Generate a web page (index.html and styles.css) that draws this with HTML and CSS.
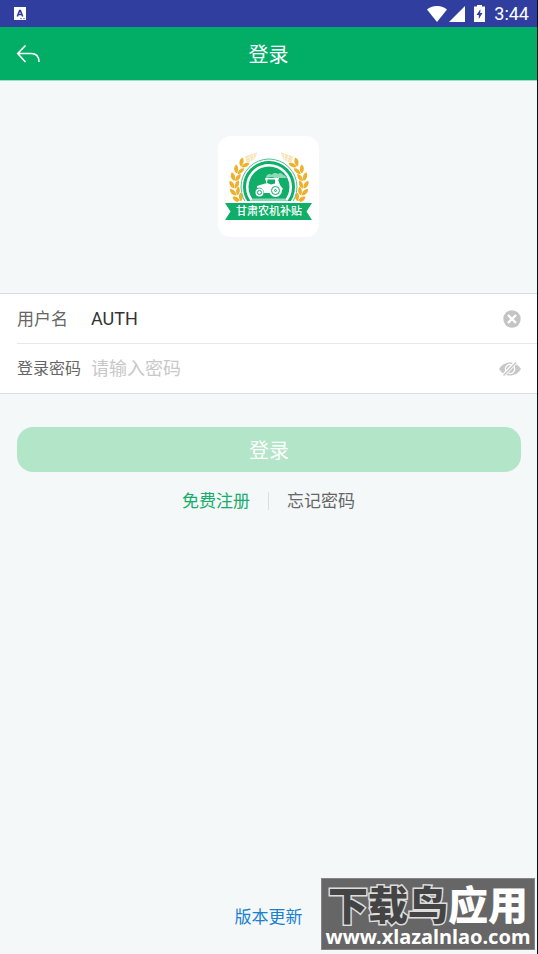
FILE: index.html
```html
<!DOCTYPE html>
<html lang="zh-CN">
  <head>
    <meta charset="utf-8">
    <title>登录</title>
    <meta content="width=device-width,initial-scale=1.0" name="viewport">
    <link rel="stylesheet" href="styles.css">
  </head>
<body>
  <div class="status-bar">
    <svg class="status-app" width="12" height="13" viewBox="0 0 12 13">
      <path fill="#fff" d="M0 0h12v13H0z"/>
      <path fill="none" stroke="#303f9f" stroke-width="1.6" d="M3.300 9.500 5.600 3.500h.8L8.700 9.500M4.300 7.500h3.400"/>
      <path stroke="#303f9f" stroke-width=".6" stroke-dasharray="2 1" d="M6 11.700h5"/>
    </svg>
    <div class="status-icons">
      <svg width="20" height="16" viewBox="0 0 20 16">
        <path fill="#fff" d="M0 3.500C6-1.200 14-1.200 20 3.500L10 16z"/>
      </svg>
      <svg width="16" height="16" viewBox="0 0 16 16">
        <path fill="#fff" d="M16 0v16H0z"/>
      </svg>
      <svg class="status-battery" width="11" height="17" viewBox="0 0 11 17">
        <path fill="#fff" d="M3 0h5v1.500h3V17H0V1.500h3z"/>
        <path fill="#303f9f" d="M6.500 4 2.500 10h2.300v4L8.500 8H6.200z"/>
      </svg>
      <span class="status-time">3:44</span>
    </div>
  </div>

  <header class="header">
    <button class="back" type="button" aria-label="返回">
      <svg width="24" height="20" viewBox="0 0 24 20">
        <path fill="none" stroke="#fff" stroke-width="1.600" d="M9.500 1.500 1.700 9.500 9.500 18M1.700 9.500H15C20 9.500 23 12.500 23 18"/>
      </svg>
    </button>
    <h1>登录</h1>
  </header>

  <main>
    <div class="logo">
      <svg width="101" height="101" viewBox="0 0 101 101">
        <defs>
          <!-- two grains of wheat on one bit of stalk -->
          <g id="grain">
            <path d="M-.2 4C-4.500 3-5.800-1-4.600-4-1.200-3 .4 0-.2 4z"/>
            <path d="M.4 4C4.500 3 5.400-1 4.400-4 1.400-3-.2 0 .4 4z"/>
          </g>
          <g id="wheat">
            <g fill="#eeb02d">
              <use href="#grain" transform="translate(20.500 62) rotate(-28)"/>
              <use href="#grain" transform="translate(17.500 55.500) rotate(-17)"/>
              <use href="#grain" transform="translate(16.500 48.500) rotate(-3)"/>
              <use href="#grain" transform="translate(17.500 41) rotate(12)"/>
              <use href="#grain" transform="translate(20.500 34) rotate(26)"/>
              <use href="#grain" transform="translate(25.500 27.500) rotate(40)"/>
            </g>
            <path fill="#f7dfb0" d="M27 20.500 39 16.500 37 23l-8 4z"/>
            <path fill="none" stroke="#fff" stroke-width=".6" d="m28 22.500 10-4M29 25l9-4M31 18l2 8M35 17l1 7"/>
          </g>
        </defs>
        <use href="#wheat"/>
        <use href="#wheat" transform="matrix(-1 0 0 1 102 0)"/>
        <circle cx="51" cy="51" r="28" fill="#fff" stroke="#51c290"/>
        <circle cx="51" cy="51" r="24.500" fill="#fff" stroke="#0fae69" stroke-width="3"/>
        <circle cx="51" cy="51" r="20.500" fill="#0fae69"/>
        <path fill="#8fd9b8" d="M48 42c0-4 4-5 6-3 1-3 5-2 6-1 2-2 4-1 5 1 2 0 3 2 4 3H57l-3-1z"/>
        <g fill="#fff">
          <path d="M47 42h14v1.500h-1L62 49l3 4-2 2-5-7-6 6v3h-6c0-4-3-6-7-5v-2l8-2.500h1.500zm2.500 1.500L49 47l4 1.500 4-1V43.500z"/>
          <circle cx="41.500" cy="56.500" r="4"/>
          <circle cx="57.500" cy="54.500" r="6.500"/>
        </g>
        <g fill="none" stroke="#0fae69">
          <circle cx="41.500" cy="56.500" r="2"/>
          <circle cx="57.500" cy="54.500" r="4"/>
          <circle cx="57.500" cy="54.500" r="1"/>
        </g>
        <path fill="#8fd9b8" d="M35 62.500h32l3 3H32z"/>
        <path fill="#fff" d="M20 65h62v3H20z"/>
        <path fill="#0fae69" d="M7 67h87l-5.500 8.500L94 84H7l5.500-8.500z"/>
        <text class="logo-text" x="51" y="79" text-anchor="middle">甘肃农机补贴</text>
      </svg>
    </div>

    <form id="loginForm">
      <div class="fields">
        <div class="field">
          <label class="label-user" for="username">用户名</label>
          <input id="username" type="text" name="username" value="AUTH">
          <button class="icon-button" type="button" aria-label="清除">
            <svg width="18" height="18" viewBox="0 0 18 18">
              <circle cx="9" cy="9" r="8.700" fill="#c4c4c4"/>
              <path stroke="#fff" stroke-width="2.400" d="m5 5 8 8M13 5l-8 8"/>
            </svg>
          </button>
        </div>
        <div class="field">
          <label for="password">登录密码</label>
          <input id="password" type="password" name="password" placeholder="请输入密码">
          <button class="icon-button" type="button" aria-label="显示密码">
            <svg width="22" height="14" viewBox="0 0 22 14">
              <path fill="#c8c8c8" d="M0 7C5-1.700 17-1.700 22 7 17 15.700 5 15.700 0 7z"/>
              <path fill="none" stroke="#fff" stroke-width="1.200" d="M7.500 10a4.600 4.600 0 0 1 5-7.300M14.500 4a4.600 4.600 0 0 1-5 7.300"/>
              <path stroke="#fff" stroke-width="3.600" d="M4 14 17 0"/>
              <path stroke="#c8c8c8" stroke-width="1.500" d="M4.500 13.500 17 .5"/>
            </svg>
          </button>
        </div>
      </div>

      <button class="submit" type="submit">登录</button>
    </form>

    <nav class="links">
      <a class="register" href="#register">免费注册</a>
      <a class="forgot" href="#forgot">忘记密码</a>
    </nav>
  </main>

  <footer>
    <a href="#update">版本更新</a>
  </footer>

  <div class="watermark">
    <div class="watermark-name"><span>下载鸟</span>应用</div>
    <div class="watermark-url">www.xlazalnlao.com</div>
  </div>
</body>
</html>
```

FILE: styles.css
```css
* {
  box-sizing: border-box;
}

body {
  display: flex;
  flex-direction: column;
  min-height: 100vh;
  margin: 0;
  border-right: 1px solid #071018;
  background: #f4f8f9;
  font-family: Roboto, "Noto Sans CJK SC", sans-serif;
  font-size: 17px;
  color: #666;
}

a {
  text-decoration: none;
}

svg {
  display: block;
}

button {
  padding: 0;
  border: 0;
  background: none;
  font-family: inherit;
  cursor: pointer;
}

.status-bar {
  display: flex;
  align-items: center;
  justify-content: space-between;
  height: 27px;
  padding: 0 8px 0 14px;
  background: #303f9f;
}

.status-icons {
  display: flex;
  align-items: center;
  gap: 2px;
}

.status-battery {
  margin: 0 7px;
}

.status-time {
  font-size: 18px;
  line-height: 27px;
  color: #fff;
}

.header {
  display: grid;
  grid-template-columns: 40px 1fr 40px;
  align-items: center;
  height: 54px;
  padding: 0 16px;
  border-bottom: 1px solid #a5dcc4;
  background: #02ae66;
}

.header h1 {
  margin: 0;
  padding-top: 2px;
  font-size: 20px;
  font-weight: normal;
  line-height: 50px;
  text-align: center;
  color: #fff;
}

.logo {
  width: 101px;
  margin: 55px auto 56px;
  border-radius: 13px;
  background: #fff;
}

.logo-text {
  font-size: 11px;
  font-weight: 500;
  fill: #fff;
}

.fields {
  padding-left: 17px;
  border-top: 1px solid #d9dddf;
  border-bottom: 1px solid #d9dddf;
  background: #fff;
}

.field {
  display: flex;
  box-sizing: content-box;
  align-items: center;
  height: 49px;
  padding-right: 16px;
}

.field + .field {
  border-top: 1px solid #e8e8e8;
}

.field label {
  flex: none;
  width: 74px;
  font-size: 16px;
  line-height: 26px;
}

.field .label-user {
  font-size: 17px;
}

.field input {
  flex: 1;
  min-width: 0;
  padding: 0;
  border: 0;
  outline: 0;
  background: none;
  font-family: inherit;
  font-size: 18px;
  line-height: 26px;
  color: #333;
}

.field input::placeholder {
  color: #c8c8c8;
}

.submit {
  display: block;
  width: calc(100% - 33px);
  height: 45px;
  margin: 33px 16px 0 17px;
  border-radius: 16px;
  background: #b3e5c8;
  font-size: 20px;
  color: #fff;
}

.links {
  display: flex;
  justify-content: center;
  margin-top: 20px;
  line-height: 18px;
}

.links a {
  padding: 0 18px;
}

.register {
  color: #18ad6c;
}

.forgot {
  border-left: 1px solid #dcdfe0;
  color: #666;
}

footer {
  margin-top: auto;
  padding-bottom: 24px;
  line-height: 25px;
  text-align: center;
}

footer a {
  color: #1a80cf;
}

/* stamp over the bottom right corner */
.watermark {
  position: absolute;
  right: 3px;
  bottom: 4px;
  width: 214px;
  height: 72px;
  border: 1px solid #858585;
  background: #666;
  text-align: center;
  white-space: nowrap;
  color: #fff;
}

.watermark-name {
  font-family: "Noto Sans CJK SC", sans-serif;
  font-size: 40px;
  font-weight: 900;
  line-height: 48px;
}

.watermark-name span {
  color: #444;
  -webkit-text-stroke: 3px #ddd;
  paint-order: stroke fill;
}

.watermark-url {
  font-family: "Noto Sans", sans-serif;
  font-size: 20px;
  font-weight: bold;
  line-height: 20px;
}
```
